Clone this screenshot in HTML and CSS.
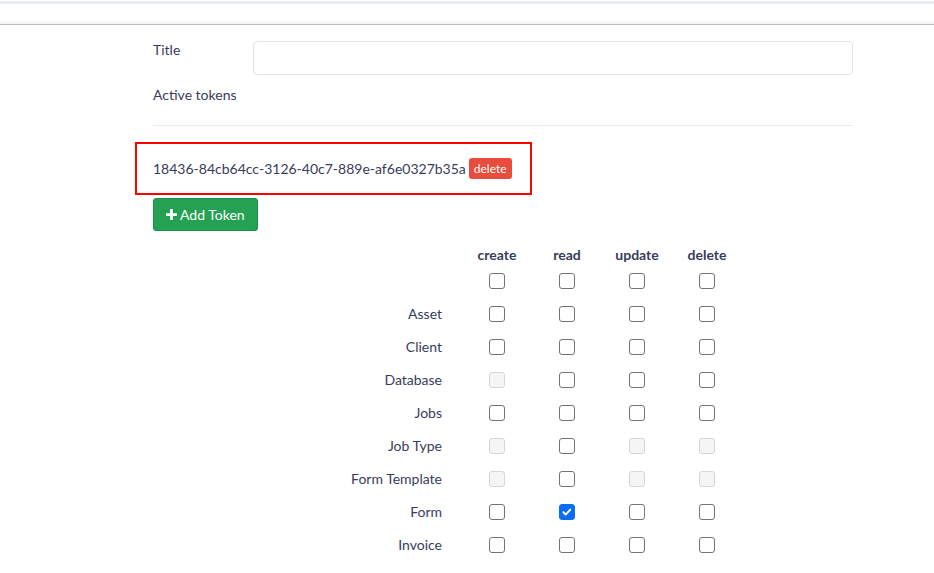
FILE: index.html
```html
<!DOCTYPE html>
<html>
<head>
<meta charset="utf-8">
<link rel="stylesheet" href="styles.css">
</head>
<body>
<div class="topstrip"></div>
<div class="topbar"></div>
<main class="content">
  <div class="form-row">
    <label class="label">Title</label>
    <div class="input"></div>
  </div>
  <div class="active">Active tokens</div>
  <div class="hr"></div>
  <div class="token-box">
    <span class="token">18436-84cb64cc-3126-40c7-889e-af6e0327b35a</span>
    <span class="badge">delete</span>
  </div>
  <button class="btn-add"><svg class="plus" viewBox="0 0 12 12" width="11" height="11"><path d="M4.5 0h3v4.5H12v3H7.5V12h-3V7.5H0v-3h4.5z" fill="#fff"/></svg>Add Token</button>

  <div class="perm">
    <div class="cell"></div><div class="head">create</div><div class="head">read</div><div class="head">update</div><div class="head">delete</div>

    <div class="name"></div><div class="cb"><span class="box"></span></div><div class="cb"><span class="box"></span></div><div class="cb"><span class="box"></span></div><div class="cb"><span class="box"></span></div>

    <div class="name">Asset</div><div class="cb"><span class="box"></span></div><div class="cb"><span class="box"></span></div><div class="cb"><span class="box"></span></div><div class="cb"><span class="box"></span></div>

    <div class="name">Client</div><div class="cb"><span class="box"></span></div><div class="cb"><span class="box"></span></div><div class="cb"><span class="box"></span></div><div class="cb"><span class="box"></span></div>

    <div class="name">Database</div><div class="cb"><span class="box disabled"></span></div><div class="cb"><span class="box"></span></div><div class="cb"><span class="box"></span></div><div class="cb"><span class="box"></span></div>

    <div class="name">Jobs</div><div class="cb"><span class="box"></span></div><div class="cb"><span class="box"></span></div><div class="cb"><span class="box"></span></div><div class="cb"><span class="box"></span></div>

    <div class="name">Job Type</div><div class="cb"><span class="box disabled"></span></div><div class="cb"><span class="box"></span></div><div class="cb"><span class="box disabled"></span></div><div class="cb"><span class="box disabled"></span></div>

    <div class="name">Form Template</div><div class="cb"><span class="box disabled"></span></div><div class="cb"><span class="box"></span></div><div class="cb"><span class="box disabled"></span></div><div class="cb"><span class="box disabled"></span></div>

    <div class="name">Form</div><div class="cb"><span class="box"></span></div><div class="cb"><span class="box checked"><svg viewBox="0 0 16 16" width="12" height="12"><path d="M3.2 8.4l3 3 6.2-6.6" fill="none" stroke="#fff" stroke-width="2.6" stroke-linecap="round" stroke-linejoin="round"/></svg></span></div><div class="cb"><span class="box"></span></div><div class="cb"><span class="box"></span></div>

    <div class="name">Invoice</div><div class="cb"><span class="box"></span></div><div class="cb"><span class="box"></span></div><div class="cb"><span class="box"></span></div><div class="cb"><span class="box"></span></div>
  </div>
</main>
</body>
</html>
```
FILE: styles.css
```css
* { box-sizing: border-box; }
body {
  margin: 0;
  background: #fff;
  font-family: "Lato", "Noto Sans", sans-serif;
  font-size: 14px;
  color: #383c5c;
}
.topstrip {
  height: 3px;
  margin-top: 1px;
  background: #e8edf2;
}
.topbar {
  height: 21px;
  background: linear-gradient(to bottom, #fff 0, #fff 16px, #f1f1f1 20px);
  border-bottom: 1px solid #bdbdbd;
}
.content {
  margin-left: 153px;
  width: 700px;
  padding-top: 16px;
}
.form-row {
  display: flex;
  align-items: flex-start;
}
.label {
  width: 100px;
  padding-top: 0;
  line-height: 18px;
}
.input {
  flex: 1;
  height: 34px;
  border: 1px solid #dfe2e8;
  border-radius: 4px;
}
.active {
  margin-top: 11px;
  line-height: 18px;
}
.hr {
  margin-top: 21px;
  height: 1px;
  background: #e9ecef;
}
.token-box {
  margin-top: 16px;
  margin-left: -18px;
  width: 397px;
  height: 53px;
  border: 2px solid #f00;
  padding-left: 16px;
  display: flex;
  align-items: center;
}
.badge {
  margin-left: 3px;
  background: #e74c3c;
  color: #fff;
  font-size: 12px;
  line-height: 15px;
  padding: 3px 5px;
  border-radius: 3px;
}
.btn-add {
  margin-top: 3px;
  display: flex;
  align-items: center;
  gap: 3px;
  height: 33px;
  padding: 0 12px;
  background: #24a152;
  border: 1px solid #1e8f47;
  border-radius: 3px;
  color: #fff;
  font-family: inherit;
  font-size: 14px;
}
.perm {
  margin-top: 15px;
  display: grid;
  grid-template-columns: 309px repeat(4, 70px);
  grid-template-rows: 18px repeat(9, 33px);
  align-items: center;
}
.head {
  text-align: center;
  font-weight: 700;
  line-height: 18px;
}
.name {
  text-align: right;
  padding-right: 20px;
}
.cb {
  display: flex;
  justify-content: center;
}
.box {
  width: 16px;
  height: 16px;
  border: 1px solid #747474;
  border-radius: 3px;
  display: flex;
  align-items: center;
  justify-content: center;
  background: #fff;
}
.box.disabled {
  border-color: #d6d6d6;
  background: #f5f5f5;
}
.box.checked {
  border-color: #0b6cf5;
  background: #0b6cf5;
}
```
